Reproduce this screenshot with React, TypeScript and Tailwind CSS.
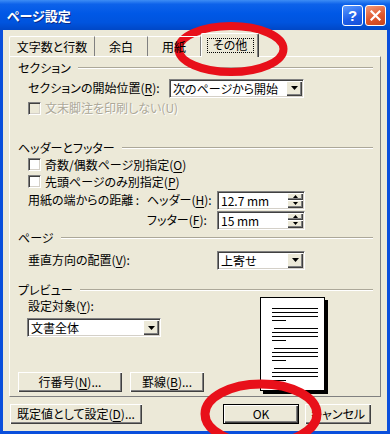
import React from "react";

const raised =
  "bg-[#ece9d8] shadow-[inset_1px_1px_0_#ffffff,inset_-1px_-1px_0_#404040,inset_-2px_-2px_0_#808080]";
const sunken =
  "border border-t-[#808080] border-l-[#808080] border-r-white border-b-white shadow-[inset_1px_1px_0_#404040,inset_-1px_-1px_0_#d4d0c8]";

function Key({ k }: { k: string }) {
  return (
    <>
      (<u className="underline-offset-2">{k}</u>)
    </>
  );
}

function Arrow({ up = false, small = false }: { up?: boolean; small?: boolean }) {
  const w = small ? 5 : 7;
  const h = small ? 3 : 4;
  return (
    <svg width={w} height={h} viewBox={`0 0 ${w} ${h}`}>
      <path d={up ? `M${w / 2} 0L${w} ${h}H0z` : `M0 0H${w}L${w / 2} ${h}z`} fill="#000" />
    </svg>
  );
}

function Select({ value, width }: { value: string; width: string }) {
  return (
    <div className={`flex h-[19px] bg-white p-px ${sunken} ${width}`}>
      <span className="flex-1 truncate pl-[2px] leading-[15px]">{value}</span>
      <span className={`flex w-[16px] items-center justify-center ${raised}`}>
        <Arrow />
      </span>
    </div>
  );
}

function Spin({ value }: { value: string }) {
  return (
    <div className={`flex h-[19px] w-[88px] bg-white p-px ${sunken}`}>
      <span className="flex-1 pl-[2px] leading-[15px]">{value}</span>
      <span className="flex w-[16px] flex-col">
        <span className={`flex flex-1 items-center justify-center ${raised}`}>
          <Arrow up small />
        </span>
        <span className={`flex flex-1 items-center justify-center ${raised}`}>
          <Arrow small />
        </span>
      </span>
    </div>
  );
}

function Box({ disabled = false }: { disabled?: boolean }) {
  return (
    <span
      className={`block size-[13px] shrink-0 ${disabled ? "bg-[#ece9d8]" : "bg-white"} ${sunken}`}
    />
  );
}

function Group({ title, className = "" }: { title: string; className?: string }) {
  return (
    <div className={`flex h-[16px] items-center pl-[8px] pr-[7px] ${className}`}>
      <span className="leading-none">{title}</span>
      <span className="ml-[7px] h-[2px] flex-1 border-t border-b border-t-[#aca899] border-b-white" />
    </div>
  );
}

function Button({ children, width, primary = false }: { children: React.ReactNode; width: string; primary?: boolean }) {
  return (
    <div
      className={`flex h-full items-center justify-center leading-none ${width} ${raised} ${
        primary ? "border border-black" : ""
      }`}
    >
      {children}
    </div>
  );
}

function PreviewPage() {
  const lines: React.ReactNode[] = [];
  for (let g = 0; g < 4; g++) {
    const top = 10 + g * 20;
    for (let i = 0; i < 3; i++) {
      const x = g > 0 && i === 0 ? 13 : 11;
      lines.push(<line key={`${g}-${i}`} x1={x} x2={57} y1={top + i * 4 + 0.5} y2={top + i * 4 + 0.5} stroke="#000" />);
    }
    lines.push(<line key={`${g}-s`} x1={11} x2={25} y1={top + 12.5} y2={top + 12.5} stroke="#000" />);
  }
  return (
    <div className="ml-[250px] mt-[-1px] h-[94px] w-[65px] shrink-0 border border-black bg-white shadow-[3px_3px_0_#000]">
      <svg width="63" height="92" viewBox="0 0 63 92">
        {lines}
      </svg>
    </div>
  );
}

export default function App() {
  return (
    <div className="relative h-[434px] w-[390px] overflow-hidden bg-[#0a4fdc] text-[12px] text-black font-['Noto_Sans_CJK_JP',sans-serif] [font-feature-settings:'palt']">
      {/* title bar */}
      <div className="flex h-[30px] items-center bg-[linear-gradient(180deg,#3d8df5_0%,#0d62ea_14%,#0058e6_45%,#0054de_75%,#0047c6_100%)] pl-[7px] pr-[4px]">
        <span className="flex-1 text-[13px] font-bold leading-none text-white [text-shadow:1px_1px_0_#0a2a8a]">
          ページ設定
        </span>
        <div className="flex gap-[2px]">
          <div className="flex size-[21px] items-center justify-center rounded-[3px] border border-white bg-[linear-gradient(160deg,#5c9bff,#1e5ee8_60%,#1650d8)] text-[15px] font-bold leading-none text-white font-['Liberation_Sans',sans-serif]">
            ?
          </div>
          <div className="flex size-[21px] items-center justify-center rounded-[3px] border border-white bg-[linear-gradient(160deg,#f19a7a,#e0582e_55%,#c9431c)]">
            <svg width="11" height="11" viewBox="0 0 11 11">
              <path d="M1.5 1.5l8 8M9.5 1.5l-8 8" stroke="#fff" strokeWidth="2.2" strokeLinecap="square" />
            </svg>
          </div>
        </div>
      </div>

      {/* dialog body */}
      <div className="ml-[3px] flex h-[401px] w-[384px] flex-col bg-[#ece9d8]">
        {/* tabs */}
        <div className="relative z-10 flex h-[26px] items-end pl-[6px]">
          <div className="flex h-[20px] w-[86px] items-center justify-center rounded-tl-[2px] border-t border-l border-r border-t-white border-l-white border-r-[#808080] leading-none">
            文字数と行数
          </div>
          <div className="flex h-[20px] w-[53px] items-center justify-center border-t border-r border-t-white border-r-[#808080] leading-none">
            余白
          </div>
          <div className="flex h-[20px] w-[53px] items-center justify-center border-t border-r border-t-white border-r-[#808080] leading-none">
            用紙
          </div>
          <div className="mb-[-1px] flex h-[24px] w-[58px] items-center justify-center rounded-t-[2px] border-t border-l border-r border-t-white border-l-white border-r-[#404040] bg-[#ece9d8] pb-px shadow-[inset_-1px_0_0_#808080]">
            <span className="flex h-[15px] w-[47px] items-center justify-center border border-dotted border-black leading-none">
              その他
            </span>
          </div>
        </div>

        {/* panel */}
        <div className="ml-[6px] flex h-[341px] w-[372px] flex-col border border-t-white border-l-white border-r-[#808080] border-b-[#808080]">
          <Group title="セクション" className="mt-[3px]" />
          <div className="mt-[2px] flex h-[20px] items-center pl-[18px]">
            <span className="w-[141px] leading-none">
              セクションの開始位置<Key k="R" />:
            </span>
            <Select value="次のページから開始" width="w-[135px]" />
          </div>
          <div className="flex h-[20px] items-center gap-[4px] pl-[18px] text-[#aca899]">
            <Box disabled />
            <span className="leading-none [text-shadow:1px_1px_0_#ffffff]">文末脚注を印刷しない(U)</span>
          </div>

          <Group title="ヘッダーとフッター" className="mt-[22px]" />
          <div className="flex h-[17px] items-center gap-[4px] pl-[18px]">
            <Box />
            <span className="leading-none">
              奇数/偶数ページ別指定<Key k="O" />
            </span>
          </div>
          <div className="flex h-[17px] items-center gap-[4px] pl-[18px]">
            <Box />
            <span className="leading-none">
              先頭ページのみ別指定<Key k="P" />
            </span>
          </div>
          <div className="flex h-[20px] items-center pl-[18px]">
            <span className="w-[119px] leading-none">用紙の端からの距離 :</span>
            <span className="w-[70px] leading-none">
              ヘッダー<Key k="H" />:
            </span>
            <Spin value="12.7 mm" />
          </div>
          <div className="flex h-[20px] items-center pl-[137px]">
            <span className="w-[70px] leading-none">
              フッター<Key k="F" />:
            </span>
            <Spin value="15 mm" />
          </div>

          <Group title="ページ" />
          <div className="mt-[4px] flex h-[20px] items-center pl-[18px]">
            <span className="w-[189px] leading-none">
              垂直方向の配置<Key k="V" />:
            </span>
            <Select value="上寄せ" width="w-[88px]" />
          </div>

          <Group title="プレビュー" className="mt-[12px]" />
          <div className="flex">
            <div className="flex w-[0px] flex-col">
              <div className="flex h-[16px] w-[200px] items-center pl-[18px] leading-none">
                設定対象<Key k="Y" />:
              </div>
              <div className="mt-[4px] pl-[17px]">
                <Select value="文書全体" width="w-[134px]" />
              </div>
              <div className="mt-[35px] flex h-[20px] w-[200px] pl-[8px]">
                <Button width="w-[104px]">
                  行番号<Key k="N" />...
                </Button>
                <div className="w-[8px]" />
                <Button width="w-[74px]">
                  罫線<Key k="B" />...
                </Button>
              </div>
            </div>
            <PreviewPage />
          </div>
        </div>

        {/* bottom buttons */}
        <div className="mt-[7px] flex h-[20px] pl-[7px]">
          <Button width="w-[132px]">
            既定値として設定<Key k="D" />...
          </Button>
          <div className="w-[81px]" />
          <Button width="w-[76px]" primary>
            OK
          </Button>
          <div className="w-[6px]" />
          <Button width="w-[66px]">キャンセル</Button>
        </div>
      </div>

      {/* red annotation marks */}
      <svg className="pointer-events-none absolute left-0 top-0" width="390" height="434" viewBox="0 0 390 434">
        <ellipse cx="231" cy="49" rx="52.5" ry="23" fill="none" stroke="#e8101a" strokeWidth="8" />
        <ellipse cx="261" cy="414" rx="56" ry="30" fill="none" stroke="#e8101a" strokeWidth="9" />
      </svg>
    </div>
  );
}
